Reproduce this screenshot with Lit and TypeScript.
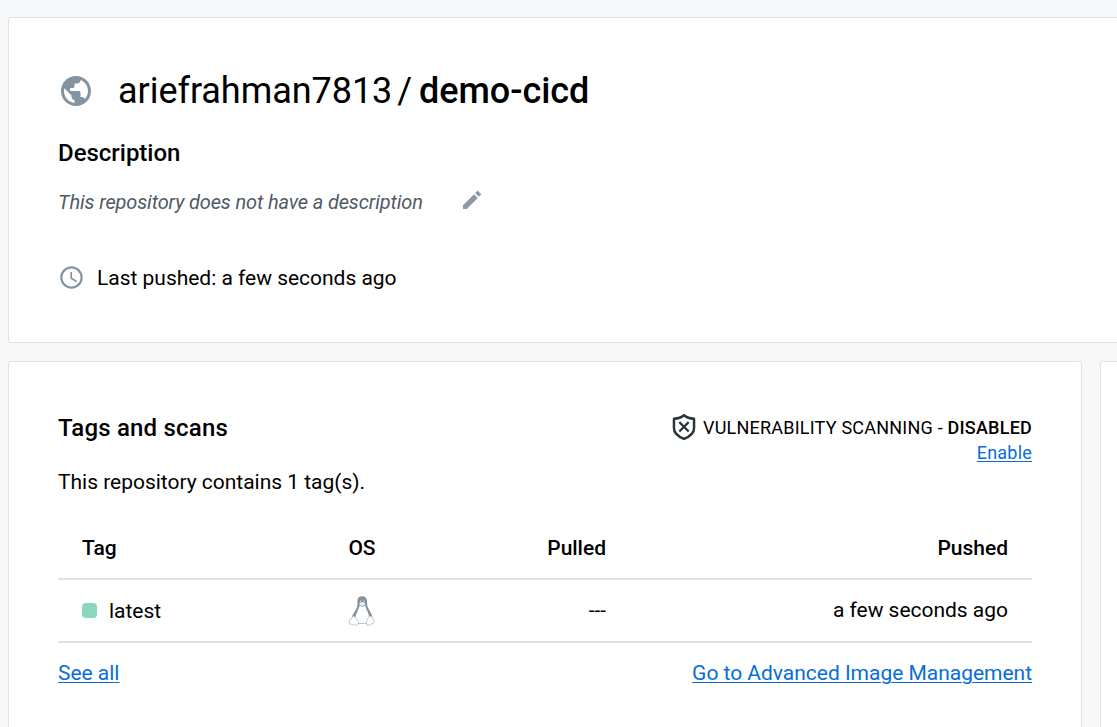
import { LitElement, html, css, svg } from "lit";
import { customElement, property } from "lit/decorators.js";

const icons: Record<string, unknown> = {
  globe: svg`<path d="M12 2C6.48 2 2 6.48 2 12s4.48 10 10 10 10-4.48 10-10S17.52 2 12 2zm-1 17.93c-3.95-.49-7-3.85-7-7.93 0-.62.08-1.21.21-1.79L9 15v1c0 1.1.9 2 2 2v1.93zm6.9-2.54c-.26-.81-1-1.39-1.9-1.39h-1v-3c0-.55-.45-1-1-1H8v-2h2c.55 0 1-.45 1-1V7h2c1.1 0 2-.9 2-2v-.41c2.93 1.19 5 4.06 5 7.41 0 2.08-.8 3.97-2.1 5.39z"/>`,
  pencil: svg`<path d="M3 17.25V21h3.75L17.81 9.94l-3.75-3.75L3 17.25zM20.71 7.04c.39-.39.39-1.02 0-1.41l-2.34-2.34c-.39-.39-1.02-.39-1.41 0l-1.83 1.83 3.75 3.75 1.83-1.83z"/>`,
  clock: svg`<path d="M11.99 2C6.47 2 2 6.48 2 12s4.47 10 9.99 10C17.52 22 22 17.52 22 12S17.52 2 11.99 2zM12 20c-4.42 0-8-3.58-8-8s3.58-8 8-8 8 3.58 8 8-3.58 8-8 8zm.5-13H11v6l5.25 3.15.75-1.23-4.5-2.67z"/>`,
  shield: svg`<path fill="none" stroke="currentColor" stroke-width="2.1" stroke-linejoin="round" d="M12 1.9C9.9 3.7 6.6 4.7 3.4 4.9V13c0 4.300 3.400 7 8.600 9.200 5.200-2.200 8.600-4.900 8.600-9.200V4.900C17.400 4.700 14.100 3.700 12 1.900z"/><path fill="none" stroke="currentColor" stroke-width="1.9" d="m8 7.800 8 8m0-8-8 8"/>`,
  linux: svg`<path d="M12.200.2C9.500.2 8.300 1.800 8.300 4.400c0 2.700.3 4-1 6.100-1.900 2.800-3.900 5.500-3.400 9.300l4 2.500h8.500l4-2.500c.4-3.800-1.500-6.900-3.200-9.600-1.200-2-1-3.400-1.100-6C16 1.800 14.600.2 12.200.2z"/><path fill="#fff" d="M10 7.500c-.4 3.300-3 6-3.200 10 0 2 1.800 3.300 2.600 4.400h5.800c1.200-1 2.700-2.700 2.600-4.800-.3-3.800-2.600-6.200-3.200-9.600-.9 1.100-3.600 1.100-4.600 0z"/><path fill="#fff" stroke="currentColor" stroke-width=".4" d="M4.900 16c1.500 0 3 2.500 4.200 4.300.8 1.400-.1 3.200-1.900 3.200-1.600-.1-3.300-1.100-5-1.200-.9-.2-.2-1.300-.3-2.500-.1-1.100 1-1 1.700-1.400.5-.5.400-2.300 1.300-2.400zM19.100 16c-1.500 0-2.600 1.700-3.100 3.500-.6 1.700-.9 4 .8 4 1.500 0 2.600-1.300 4.500-2.100.9-.5 1-1-.1-1.900-.8-.8-.2-3.200-2.100-3.500z"/><path fill="#fff" opacity=".85" d="M9.900 5.600l2.300-.9 2.300.9-.3 1.500c-1.200 1-2.700 1-4 0z"/><circle cx="10.900" cy="4" r=".5" fill="#fff"/><circle cx="13.500" cy="4" r=".5" fill="#fff"/>`,
};

@customElement("ui-icon")
export class UiIcon extends LitElement {
  @property() name = "";
  static styles = css`
    :host { display: block; flex: none; }
    .glyph { display: block; width: 100%; height: 100%; fill: currentColor; }
  `;
  render() {
    return html`<svg class="glyph" viewBox="0 0 24 24" aria-hidden="true">${icons[this.name]}</svg>`;
  }
}

@customElement("app-root")
export class AppRoot extends LitElement {
  static styles = css`
    :host {
      display: block; height: 727px; overflow: hidden; box-sizing: border-box;
      background: #f7f8fa; color: #000; padding: 17px 0 0 8px;
      font: 400 21px/30px Roboto, sans-serif; letter-spacing: -0.02px;
    }
    * { box-sizing: border-box; }
    h1, h2, p { margin: 0; }
    a { color: #086dd7; text-decoration: underline; text-decoration-thickness: 1px; text-underline-offset: 2px; }
    .card { background: #fff; border: 1px solid #dfe2e6; border-radius: 3px; }
    .summary { width: 1127px; height: 326px; padding: 49px; }
    .title { display: flex; align-items: center; height: 48px; }
    .globe { width: 36px; height: 36px; color: #8393a0; }
    h1 { display: flex; font-size: 36px; line-height: 48px; font-weight: 400; margin-left: 24px; white-space: nowrap; letter-spacing: -0.05px; }
    .slash { margin: 0 7px 0 5px; }
    h1 b, .status b { font-weight: 500; }
    h2 { font-size: 24px; line-height: 32px; font-weight: 500; white-space: nowrap; }
    .summary h2 { margin-top: 22px; }
    .about { display: flex; align-items: center; height: 30px; margin-top: 18px; }
    .about em { color: #505a66; font-size: 20px; letter-spacing: -0.145px; width: 402px; white-space: nowrap; }
    .pencil { width: 24px; height: 24px; color: #8f95ad; margin-bottom: 4px; }
    .pushed { display: flex; align-items: center; gap: 12px; height: 30px; margin-top: 46px; }
    .clock { width: 27px; height: 27px; color: #8393a0; margin-bottom: 2px; }
    .row { display: flex; gap: 18px; margin-top: 18px; }
    .tags { width: 1074px; height: 390px; flex: none; padding: 49px; }
    .side { width: 100px; height: 390px; flex: none; }
    .head { display: flex; justify-content: space-between; height: 56px; }
    .head h2 { padding-top: 1px; letter-spacing: 0.2px; }
    .state { font-size: 18px; line-height: 25px; text-align: right; padding-top: 4px; white-space: nowrap; letter-spacing: 0.22px; }
    .status { display: flex; align-items: center; height: 25px; }
    .shield { width: 28px; height: 28px; color: #27343b; margin: -1px 5px 0 0; }
    .count { height: 30px; }
    .grid { display: grid; grid-template-columns: 218px 124px 182px 1fr; margin-top: 20px; height: 63px; padding: 0 24px; align-items: center; border-bottom: 2px solid #e0e0e0; white-space: nowrap; }
    .line { margin-top: 0; }
    .labels { font-weight: 500; }
    .center { justify-self: center; }
    .right { justify-self: end; }
    .line .right { padding-bottom: 2px; }
    .tag { display: flex; align-items: center; gap: 12px; }
    .dot { width: 15px; height: 15px; border-radius: 4px; background: #8ad7bf; }
    .linux { width: 30px; height: 30px; color: #8393a0; }
    .links { display: flex; justify-content: space-between; margin-top: 15px; white-space: nowrap; }
  `;
  render() {
    return html`
      <section class="card summary">
        <div class="title">
          <ui-icon class="globe" name="globe"></ui-icon>
          <h1><span class="owner">ariefrahman7813</span><span class="slash">/</span><b>demo-cicd</b></h1>
        </div>
        <h2>Description</h2>
        <div class="about"><em>This repository does not have a description</em><ui-icon class="pencil" name="pencil"></ui-icon></div>
        <div class="pushed"><ui-icon class="clock" name="clock"></ui-icon><span>Last pushed: a few seconds ago</span></div>
      </section>
      <div class="row">
        <section class="card tags">
          <div class="head">
            <h2>Tags and scans</h2>
            <div class="state">
              <div class="status"><ui-icon class="shield" name="shield"></ui-icon><span>VULNERABILITY SCANNING - <b>DISABLED</b></span></div>
              <a class="enable">Enable</a>
            </div>
          </div>
          <p class="count">This repository contains 1 tag(s).</p>
          <div class="grid labels"><span>Tag</span><span class="center">OS</span><span class="right">Pulled</span><span class="right">Pushed</span></div>
          <div class="grid line">
            <span class="tag"><i class="dot"></i><span>latest</span></span>
            <ui-icon class="linux center" name="linux"></ui-icon>
            <span class="right">---</span><span class="right ago">a few seconds ago</span>
          </div>
          <div class="links"><a>See all</a><a>Go to Advanced Image Management</a></div>
        </section>
        <aside class="card side"></aside>
      </div>`;
  }
}
